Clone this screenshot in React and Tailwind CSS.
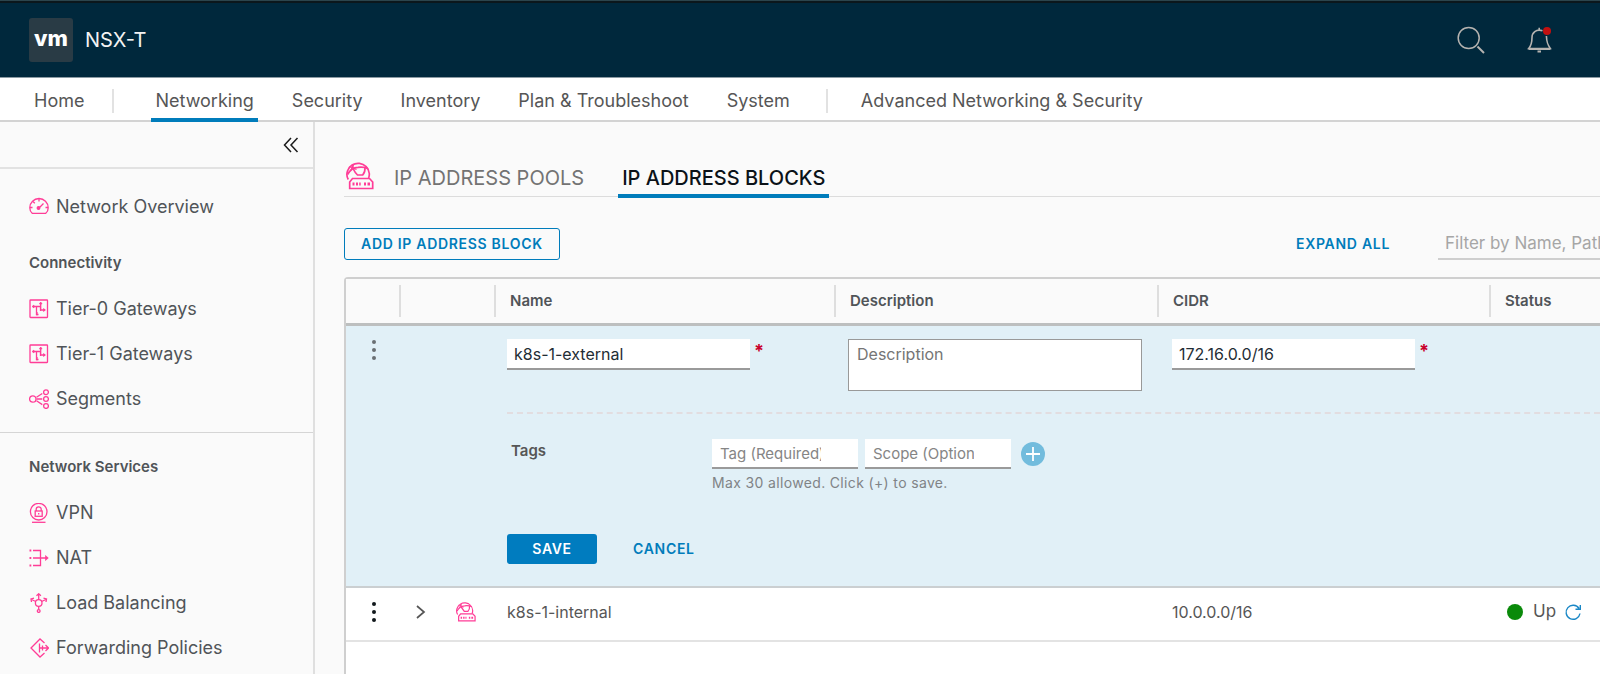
import { useState } from 'react';

const topTabs = ['Networking', 'Security', 'Inventory', 'Plan & Troubleshoot', 'System'];

function Svg({ size = 20, box = 20, width = 1.3, className = '', children }) {
  return (
    <svg
      width={size}
      height={size}
      viewBox={`0 0 ${box} ${box}`}
      fill="none"
      stroke="currentColor"
      strokeWidth={width}
      className={`shrink-0 ${className}`}
      aria-hidden="true"
    >
      {children}
    </svg>
  );
}

function IpBlockIcon({ size = 28 }) {
  return (
    <Svg size={size} box={28} width={1.7} className="text-[#ff3d97]">
      <path d="M2.300 17.500C.8 15 .8 11 1.500 9A11.200 11.200 0 0 1 23.300 11.500C23.400 13 23 15 22.600 16" />
      <path d="M1.500 12.500C4 8 8 5.500 12 5.300c4-.3 8-.2 10 1.500" />
      <path d="M6.500 3c.2 4 2 7 5 10h5.200c2-2.500 2.600-5 2.300-8" />
      <path d="M3.500 4.500l7 3M8 2l-3.500 6.500" strokeWidth="1.100" />
      <path d="M6.500 16.500h17l3.200 3.500v6.500h-23V20z" />
      <path d="M6.500 22h2M10 22h2M13.200 22h1.500M18 22h2M21.500 22h2.500" strokeWidth="2.800" />
    </Svg>
  );
}

const icons = {
  overview: (
    <>
      <path d="M3.200 16.300C1.600 15 .8 12.800.8 10.700a9.200 9.200 0 0 1 18.400 0c0 2.100-.8 4.300-2.400 5.600z" />
      <path d="M10 1.500v3M4 4.500l1.800 1.800M1 10.500h2.500M16.500 10.500H19M9.500 11.500l5-5" />
      <circle cx="9.500" cy="11" r="1.300" fill="currentColor" />
    </>
  ),
  gateway: (
    <>
      <rect x="1" y="1" width="17.500" height="17.500" rx="0.500" />
      <path d="M3.500 7.500H11.500V12M7.500 7.500V15.500H9.500M11.700 3.500V11H16M8 16.500V13" />
      <path d="M5 6L3.200 7.500 5 9zM10.300 5l1.400-2 1.400 2zM14.500 9.500l2 1.500-2 1.500z" fill="currentColor" strokeWidth="0.600" />
    </>
  ),
  segments: (
    <>
      <circle cx="3.800" cy="10" r="3.200" />
      <circle cx="17" cy="3.200" r="2.400" />
      <circle cx="17" cy="10" r="2.400" />
      <circle cx="17" cy="17" r="2.400" />
      <path d="M7.500 8.200l5.800-3.700M7.500 10h5.800M7.500 11.800l5.800 3.800" />
    </>
  ),
  vpn: (
    <>
      <circle cx="9.700" cy="8.700" r="8.300" />
      <rect x="6.200" y="8" width="7" height="5.300" />
      <path d="M7.200 8V6.300a2.500 2.500 0 0 1 5 0V8M9.700 10v1.500" />
      <path d="M3 19.300h13.500" />
    </>
  ),
  nat: (
    <>
      <path d="M4 2.500h7.500v15H4M4 10h14.500" />
      <path d="M16.500 7.500l2.800 2.500-2.800 2.500z" fill="currentColor" strokeWidth="0.600" />
      <path d="M.5 2.500h1.800M.5 10h1.800M.5 17.500h1.800" strokeWidth="2.200" />
    </>
  ),
  load: (
    <>
      <circle cx="9.700" cy="10" r="3.300" />
      <circle cx="9.700" cy="18" r="1.400" />
      <path d="M9.700 6.500V1M9.700 13.500v3M6.800 8.500L2.500 6.500M12.600 8.500l4.300-2" />
      <path d="M7.500 2.800L9.700.8l2.200 2M2.500 9L2 6l3-.9M17 9l.5-3-3-.9" />
    </>
  ),
  forwarding: (
    <>
      <path d="M15.500 5L11 1 2 10l9 9 4.500-4" />
      <path d="M10.500 5.500v9M10.500 10H19M16.500 7l3 3-3 3M13.500 7.500v5" />
    </>
  ),
};

function SideItem({ icon, label }) {
  return (
    <li>
      <a href="#" className="flex h-[45px] items-center gap-[7px] pl-[29px] text-lg text-[#505458]">
        <Svg className="text-[#ff3d97]">{icons[icon]}</Svg>
        {label}
      </a>
    </li>
  );
}

function SideHeading({ children }) {
  return <h2 className="flex h-[45px] items-center pl-[29px] text-[15px] font-semibold text-[#505458]">{children}</h2>;
}

function Kebab({ className, label }) {
  return (
    <button type="button" aria-label={label} className={`flex w-4 flex-col items-center gap-1 ${className}`}>
      <span className="size-1 rounded-full bg-current" />
      <span className="size-1 rounded-full bg-current" />
      <span className="size-1 rounded-full bg-current" />
    </button>
  );
}

function HeadCell({ children, last }) {
  return (
    <th scope="col" className="border-b-3 border-[#bdbfbf] p-0 text-left">
      <div className={`flex h-8 items-center pl-[14px] text-[15px] font-semibold text-[#505458] ${last ? '' : 'border-r-2 border-[#dedede]'}`}>
        {children}
      </div>
    </th>
  );
}

export default function App() {
  const [form, setForm] = useState({ name: 'k8s-1-external', description: '', cidr: '172.16.0.0/16', tag: '', scope: '' });
  const update = (e) => setForm({ ...form, [e.target.name]: e.target.value });

  return (
    <div className="flex min-h-screen flex-col overflow-hidden border-t border-[#2b454d] bg-[#fafafa] font-['Inter','Liberation_Sans',sans-serif] text-[#565656]">
      {/* Header */}
      <header className="flex h-[77px] items-center border-b border-t-2 border-t-[#0b171c] border-b-[#8b9aa3] bg-[#00283c] pl-[29px] pr-[47px]">
        <div className="flex size-11 items-center justify-center rounded-[3px] bg-[#293b45] pb-1 text-[22px] font-extrabold text-white">
          vm
        </div>
        <span className="ml-3 text-xl text-[#f3f3f3]">NSX-T</span>
        <div className="ml-auto flex items-center gap-[42px] text-[#b5b3b0]">
          <button type="button" aria-label="Search">
            <Svg size={28} box={28} width={1.5}>
              <circle cx="11.700" cy="12" r="10.500" />
              <path d="M20.500 20.500l6.500 6.500" strokeWidth="1.900" />
            </Svg>
          </button>
          <button type="button" aria-label="Notifications" className="relative">
            <Svg size={26} box={26} width={1.6}>
              <path d="M15.500 3.700C9 1.500 5 6 5 10.500c0 5-.3 7.500-3.300 11h21.600c-2.500-3.500-3.600-5.500-3.900-12.500M12.200.8v2.500" />
              <path d="M1.500 22h22M10.500 24.500h3.500" strokeWidth="2" />
            </Svg>
            <span className="absolute right-0.5 top-0 size-2 rounded-full bg-[#c21010]" />
          </button>
        </div>
      </header>

      {/* Top navigation */}
      <nav className="flex h-11 items-stretch border-b-2 border-[#d3d3d3] bg-white pl-[34px] text-lg">
        <a href="#" className="flex items-center pt-1">Home</a>
        <span className="ml-7 mt-1 h-6 w-0.5 self-center bg-[#e2e2e2]" />
        <div className="ml-[37px] flex gap-[30px]">
          {topTabs.map((tab) => (
            <a
              key={tab}
              href="#"
              className={`-mb-0.5 flex items-center border-b-4 px-1 pt-1.5 ${tab === 'Networking' ? 'border-[#007cbb]' : 'border-transparent'}`}
            >
              {tab}
            </a>
          ))}
        </div>
        <span className="ml-8 mt-1 h-6 w-0.5 self-center bg-[#e2e2e2]" />
        <a href="#" className="ml-[33px] flex items-center pt-1">Advanced Networking &amp; Security</a>
      </nav>

      <div className="flex flex-1">
        {/* Sidebar */}
        <aside className="w-[315px] shrink-0 border-r-2 border-[#dfdfdf]">
          <div className="flex h-[47px] items-center justify-end border-b-2 border-[#e2e2e2] pr-[14px]">
            <button type="button" aria-label="Collapse menu" className="text-[#1b1b1b]">
              <Svg size={16} box={16} width={1.5}>
                <path d="M8 1L1.500 8 8 15M14.500 1L8 8l6.500 7" />
              </Svg>
            </button>
          </div>
          <ul className="pt-[15px]">
            <SideItem icon="overview" label="Network Overview" />
          </ul>
          <section className="border-b border-[#d5d5d5] pb-[11px] pt-3">
            <SideHeading>Connectivity</SideHeading>
            <ul>
              <SideItem icon="gateway" label="Tier-0 Gateways" />
              <SideItem icon="gateway" label="Tier-1 Gateways" />
              <SideItem icon="segments" label="Segments" />
            </ul>
          </section>
          <section className="pt-3">
            <SideHeading>Network Services</SideHeading>
            <ul>
              <SideItem icon="vpn" label="VPN" />
              <SideItem icon="nat" label="NAT" />
              <SideItem icon="load" label="Load Balancing" />
              <SideItem icon="forwarding" label="Forwarding Policies" />
            </ul>
          </section>
        </aside>

        <main className="flex min-w-0 flex-1 flex-col pl-[29px] pt-[35px]">
          {/* Page tabs */}
          <div className="flex h-10 items-end border-b border-[#dcdcdc] pl-0.5 text-xl">
            <div className="pb-1.5">
              <IpBlockIcon />
            </div>
            <button type="button" className="ml-5 h-10 whitespace-nowrap pt-1 text-[#737373]">IP ADDRESS POOLS</button>
            <button type="button" className="-mb-0.5 ml-[34px] h-[42px] whitespace-nowrap border-b-4 border-[#007cbb] px-1 pt-1.5 font-medium text-[#0b1218]">
              IP ADDRESS BLOCKS
            </button>
          </div>

          {/* Toolbar */}
          <div className="mt-[31px] flex h-8 items-center">
            <button type="button" className="h-8 rounded-[3px] border border-[#007cbb] px-4 text-sm font-semibold tracking-wider text-[#007cbb]">
              ADD IP ADDRESS BLOCK
            </button>
            <button type="button" className="ml-auto text-sm font-semibold tracking-wider text-[#007cbb]">EXPAND ALL</button>
            <div className="ml-12 w-[162px] overflow-hidden">
              <input
                type="text"
                aria-label="Filter"
                placeholder="Filter by Name, Path and more"
                className="h-8 w-full border-b-2 border-[#cfcfcf] pl-[7px] text-[17px] placeholder:text-[#a6a6a6]"
              />
            </div>
          </div>

          {/* Blocks table */}
          <div className="mt-[17px] flex-1 rounded-tl border-l-2 border-t-2 border-[#cfcfcf] bg-white">
            <table className="w-full table-fixed border-separate border-spacing-0">
              <colgroup>
                <col className="w-[55px]" />
                <col className="w-[95px]" />
                <col className="w-[340px]" />
                <col className="w-[323px]" />
                <col className="w-[332px]" />
                <col />
              </colgroup>
              <thead>
                <tr className="h-[47px] bg-[#fafafa]">
                  <HeadCell />
                  <HeadCell />
                  <HeadCell>Name</HeadCell>
                  <HeadCell>Description</HeadCell>
                  <HeadCell>CIDR</HeadCell>
                  <HeadCell last>Status</HeadCell>
                </tr>
              </thead>
              <tbody>
                <tr className="h-[86px] bg-[#e1f0f7] align-top">
                  <td className="pl-5 pt-[14px]">
                    <Kebab label="Actions for k8s-1-external" className="text-[#6a6f73]" />
                  </td>
                  <td />
                  <td className="pl-[11px] pt-[13px]">
                    <div className="flex gap-1">
                      <input
                        name="name"
                        aria-label="Name"
                        value={form.name}
                        onChange={update}
                        className="h-[31px] w-[243px] border-b-2 border-[#9a9a9a] bg-white px-[7px] text-base text-[#1f2d35]"
                      />
                      <span className="text-lg font-bold leading-6 text-[#c9002a]">*</span>
                    </div>
                  </td>
                  <td className="px-3 pt-[13px]">
                    <textarea
                      name="description"
                      aria-label="Description"
                      placeholder="Description"
                      value={form.description}
                      onChange={update}
                      className="block h-[52px] w-[294px] resize-none border border-[#999] bg-white px-2 py-0.5 text-base leading-6 placeholder:text-[#757575]"
                    />
                  </td>
                  <td className="pl-[13px] pt-[13px]">
                    <div className="flex gap-1">
                      <input
                        name="cidr"
                        aria-label="CIDR"
                        value={form.cidr}
                        onChange={update}
                        className="h-[31px] w-[243px] border-b-2 border-[#9a9a9a] bg-white px-[7px] text-base text-[#1f2d35]"
                      />
                      <span className="text-lg font-bold leading-6 text-[#c9002a]">*</span>
                    </div>
                  </td>
                  <td />
                </tr>
                <tr className="bg-[#e1f0f7] align-top">
                  <td colSpan={2} className="border-b-2 border-[#cbcfd1]" />
                  <td colSpan={4} className="border-b-2 border-[#cbcfd1] pl-[11px]">
                    <div className="border-t-2 border-dashed border-[#e2dde0] pt-[25px]">
                      <div className="flex">
                        <label htmlFor="tag" className="w-[205px] pl-1 text-[15px] font-semibold leading-6">Tags</label>
                        <div>
                          <div className="flex items-center gap-[7px]">
                            <input
                              id="tag"
                              name="tag"
                              placeholder="Tag (Required)"
                              value={form.tag}
                              onChange={update}
                              className="h-[30px] w-[146px] border-b-2 border-[#9a9a9a] bg-white pl-2 pr-[37px] text-[15px] placeholder:text-[#858585]"
                            />
                            <input
                              name="scope"
                              aria-label="Scope"
                              placeholder="Scope (Optional)"
                              value={form.scope}
                              onChange={update}
                              className="h-[30px] w-[146px] border-b-2 border-[#9a9a9a] bg-white pl-2 pr-[37px] text-[15px] placeholder:text-[#858585]"
                            />
                            <button type="button" aria-label="Add tag" className="ml-[3px] flex size-6 items-center justify-center rounded-full bg-[#72bcdd] text-white">
                              <Svg size={14} box={14} width={1.8}>
                                <path d="M7 0v14M0 7h14" />
                              </Svg>
                            </button>
                          </div>
                          <p className="mt-1 text-sm leading-5 tracking-wide text-[#808386]">Max 30 allowed. Click (+) to save.</p>
                        </div>
                      </div>
                      <div className="mb-[22px] mt-[41px] flex items-center">
                        <button type="button" className="h-[30px] w-[90px] rounded-[3px] bg-[#007cbf] text-sm font-semibold tracking-wider text-white">
                          SAVE
                        </button>
                        <button type="button" className="ml-9 text-sm font-semibold tracking-wider text-[#007cbb]">CANCEL</button>
                      </div>
                    </div>
                  </td>
                </tr>
                <tr className="h-[54px] text-base *:border-b-2 *:border-[#e3e3e3] *:pb-1">
                  <td className="pl-5">
                    <Kebab label="Actions for k8s-1-internal" className="text-[#11181c]" />
                  </td>
                  <td>
                    <div className="flex items-center gap-[29px] pl-3">
                      <button type="button" aria-label="Expand row">
                        <Svg size={14} box={14} width={1.7}>
                          <path d="M4 1l7 6-7 6" />
                        </Svg>
                      </button>
                      <IpBlockIcon size={20} />
                    </div>
                  </td>
                  <td className="pl-[11px]">k8s-1-internal</td>
                  <td />
                  <td className="pl-[13px]">10.0.0.0/16</td>
                  <td>
                    <div className="flex items-center pl-4 text-[17px]">
                      <span className="size-4 rounded-full bg-[#0a8a0a]" />
                      <span className="ml-2.5">Up</span>
                      <button type="button" aria-label="Refresh status" className="ml-2 text-[#1a87c6]">
                        <Svg size={18} box={18} width={1.4}>
                          <path d="M15 5.500A7 7 0 1 0 16 10.500M16.300 2v4.300H11.500" />
                        </Svg>
                      </button>
                    </div>
                  </td>
                </tr>
              </tbody>
            </table>
          </div>
        </main>
      </div>
    </div>
  );
}
